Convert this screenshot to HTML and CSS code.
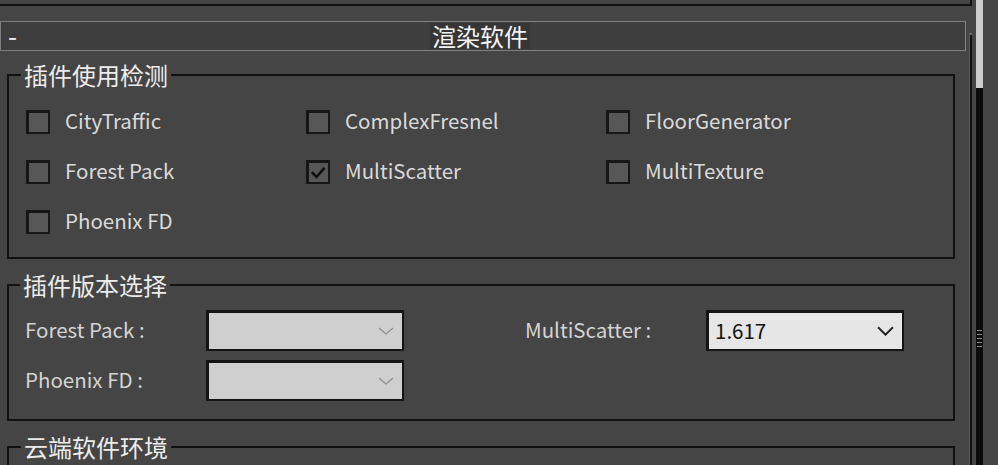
FILE: index.html
```html
<!DOCTYPE html>
<html lang="zh-CN">
<head>
    <meta charset="UTF-8">
    <title>渲染软件</title>
    <link rel="stylesheet" href="styles.css">
</head>
<body>
    <div class="window">
        <div class="main">
            <!-- 上一个卷展栏的底边 -->
            <div class="prev-panel"></div>

            <div class="rollout">
                <div class="rollout-inner">
                    <div class="rollout-head">
                        <span class="toggle">-</span>
                        <span class="rollout-title">渲染软件</span>
                        <span></span>
                    </div>

                    <div class="rollout-body">
                        <!-- 插件使用检测 -->
                        <fieldset class="group">
                            <legend>插件使用检测</legend>
                            <div class="check-grid">
                                <label class="check"><span class="box"></span><span class="text">CityTraffic</span></label>
                                <label class="check"><span class="box"></span><span class="text">ComplexFresnel</span></label>
                                <label class="check"><span class="box"></span><span class="text">FloorGenerator</span></label>
                                <label class="check"><span class="box"></span><span class="text">Forest Pack</span></label>
                                <label class="check"><span class="box checked"><svg viewBox="0 0 24 24" width="20" height="20"><path d="M3.5 11 L9.5 17 L19.5 5.5" fill="none" stroke="#0e0e0e" stroke-width="3.2"/></svg></span><span class="text">MultiScatter</span></label>
                                <label class="check"><span class="box"></span><span class="text">MultiTexture</span></label>
                                <label class="check"><span class="box"></span><span class="text">Phoenix FD</span></label>
                            </div>
                        </fieldset>

                        <!-- 插件版本选择 -->
                        <fieldset class="group">
                            <legend>插件版本选择</legend>
                            <div class="version-grid">
                                <span class="field-label">Forest Pack :</span>
                                <div class="select disabled">
                                    <span class="value"></span>
                                    <svg viewBox="0 0 16 8" width="16" height="8"><path d="M1 1 L8 7 L15 1" fill="none" stroke="#8e8e8e" stroke-width="1.2"/></svg>
                                </div>
                                <span></span>
                                <span class="field-label">MultiScatter :</span>
                                <div class="select">
                                    <span class="value">1.617</span>
                                    <svg viewBox="0 0 16 9" width="17" height="10"><path d="M1 1 L8 8 L15 1" fill="none" stroke="#222" stroke-width="1.8"/></svg>
                                </div>
                                <span class="field-label">Phoenix FD :</span>
                                <div class="select disabled">
                                    <span class="value"></span>
                                    <svg viewBox="0 0 16 8" width="16" height="8"><path d="M1 1 L8 7 L15 1" fill="none" stroke="#8e8e8e" stroke-width="1.2"/></svg>
                                </div>
                            </div>
                        </fieldset>

                        <!-- 云端软件环境 -->
                        <fieldset class="group">
                            <legend>云端软件环境</legend>
                            <div class="cloud-body"></div>
                        </fieldset>
                    </div>
                </div>
                <div class="rollout-edge"></div>
            </div>
        </div>

        <!-- 滚动条 -->
        <div class="scrollbar">
            <div class="thumb"></div>
            <div class="track"><div class="grip"></div></div>
        </div>
    </div>
</body>
</html>
```

FILE: styles.css
```css
/* 全局样式 */
* {
    margin: 0;
    padding: 0;
    box-sizing: border-box;
}

body {
    font-family: "Noto Sans CJK SC", "Noto Sans", sans-serif;
    background: #454545;
    color: #e2e2e2;
    height: 465px;
    overflow: hidden;
}

.window {
    display: flex;
    height: 465px;
}

.main {
    width: 972px;
    flex: 0 0 972px;
}

/* 上一个卷展栏 */
.prev-panel {
    height: 6px;
    border-bottom: 2px solid #111;
    border-right: 2px solid #111;
}

/* 卷展栏 */
.rollout {
    display: flex;
    margin-top: 15px;
}

.rollout-inner {
    width: 966px;
}

.rollout-edge {
    width: 3px;
    margin-left: 3px;
    margin-top: 12px;
    height: 500px;
    background: #111;
    border-top: 2px solid #6a6a6a;
    border-left: 1px solid #5a5a5a;
}

.rollout-head {
    height: 30px;
    display: grid;
    grid-template-columns: 1fr auto 1fr;
    align-items: center;
    border: 1px solid #808080;
    background: #3e3e3e;
}

.toggle {
    padding-left: 7px;
    font-size: 26px;
    line-height: 26px;
    color: #f0f0f0;
    margin-top: -2px;
}

.rollout-title {
    font-size: 24px;
    line-height: 26px;
    color: #f4f4f4;
    background: #363636;
    padding: 0 2px;
    margin-left: -6px;
}

.rollout-body {
    padding: 0 11px 0 7px;
}

/* 分组框 */
.group {
    border: 2px solid #121212;
    margin-top: 12px;
    padding: 17px 16px 17px 17px;
}

.group + .group {
    margin-top: 14px;
}

.group legend {
    font-size: 24px;
    line-height: 24px;
    padding: 0 3px;
    margin-left: -5px;
    color: #ececec;
}

/* 复选框 */
.check-grid {
    display: grid;
    grid-template-columns: 280px 300px 1fr;
    row-gap: 14px;
}

.check {
    display: flex;
    align-items: center;
    gap: 15px;
    height: 36px;
    font-size: 20.5px;
    color: #dadada;
}

.check .text {
    padding-bottom: 4px;
}

.box {
    width: 24px;
    height: 24px;
    flex: 0 0 24px;
    background: #575757;
    border: 2px solid #161616;
    border-top-width: 3px;
    border-left-width: 3px;
    display: flex;
    align-items: center;
    justify-content: center;
}

/* 版本选择 */
.group:nth-of-type(2) {
    padding: 13px 16px 18px 16px;
}

.version-grid {
    display: grid;
    grid-template-columns: 181px 198px 121px 181px 198px;
    grid-auto-rows: 41px;
    row-gap: 9px;
    align-items: center;
}

.field-label {
    font-size: 20.5px;
    color: #d4d4d4;
    padding-bottom: 4px;
}

.select {
    height: 41px;
    display: flex;
    align-items: center;
    justify-content: space-between;
    padding: 0 8px 0 6px;
    background: #e6e6e6;
    border: 2px solid #141414;
    border-top-width: 3px;
    border-left-width: 3px;
}

.select.disabled {
    background: #cfcfcf;
}

.select .value {
    font-size: 20.5px;
    color: #111;
    padding-bottom: 3px;
}

/* 云端软件环境 */
.cloud-body {
    height: 60px;
}

/* 滚动条 */
.scrollbar {
    width: 7px;
    margin-left: 4px;
    display: flex;
    flex-direction: column;
}

.thumb {
    height: 88px;
    background: #cdcdcd;
}

.track {
    flex: 1;
    background: #0c0c0c;
    padding-top: 242px;
}

.grip {
    height: 20px;
    margin: 0 1px;
    background: repeating-linear-gradient(#8a8a8a 0 1px, transparent 1px 4px);
}
```
